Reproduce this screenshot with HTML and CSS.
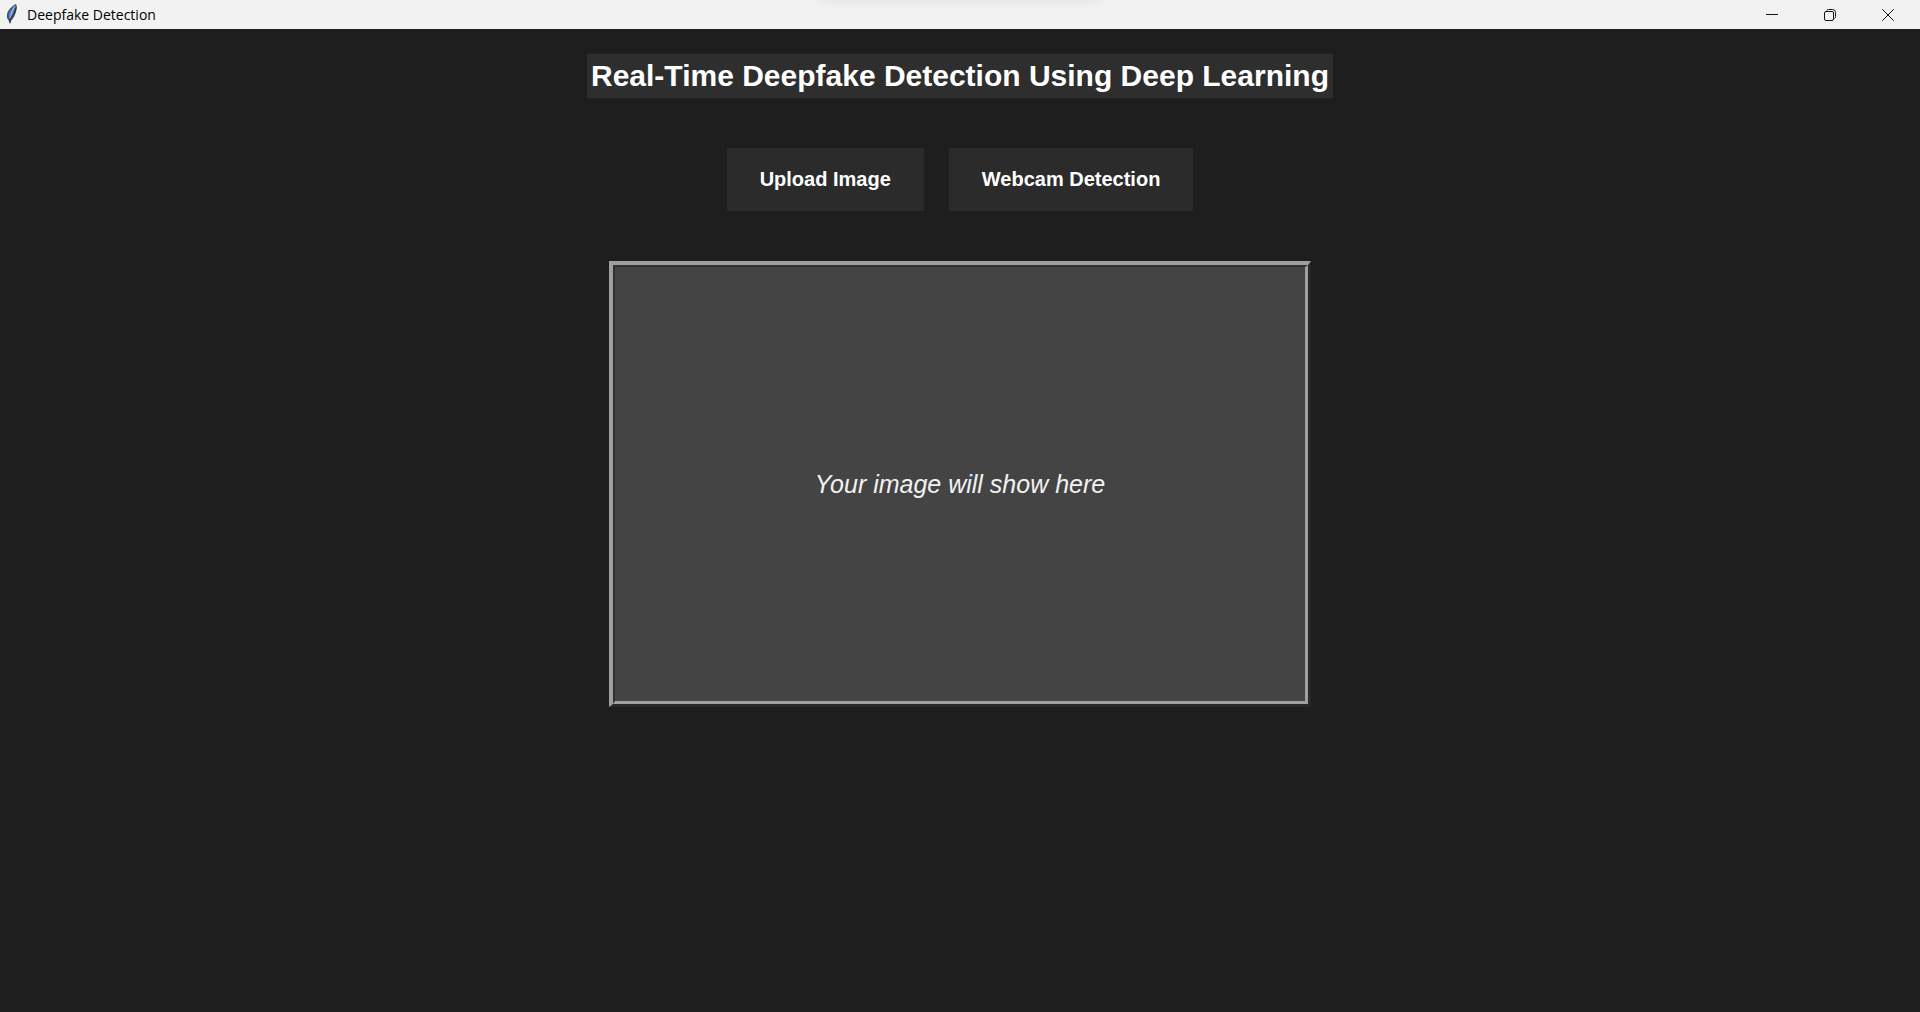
FILE: index.html
```html
<!DOCTYPE html>
<html lang="en">
<head>
<meta charset="utf-8">
<title>Deepfake Detection</title>
<link rel="stylesheet" href="styles.css">
</head>
<body>
<div class="window">
  <header class="titlebar">
    <svg class="feather" width="12" height="20" viewBox="0 0 12 20" aria-hidden="true">
      <path d="M10 0C6 2 2 6 1 10L1 14L3 17L4 20L5 17L8 13L10 8L11 3Z" fill="#435466"/>
      <path d="M9.500 1.500C6 4 3 7 2.500 11L3 15L7 11L9 6Z" fill="#4f82bd"/>
      <path d="M9 2C6 6 5 10 4 15" fill="none" stroke="#a9c7e8"/>
      <path d="M10 4L8 10L4 15V19" fill="none" stroke="#20262d"/>
    </svg>
    <span class="caption">Deepfake Detection</span>
    <div class="window-controls">
      <button class="control" type="button" aria-label="Minimize">
        <svg width="12" height="12" viewBox="0 0 12 12"><path d="M0 5.500H12"/></svg>
      </button>
      <button class="control" type="button" aria-label="Restore">
        <svg width="12" height="12" viewBox="0 0 12 12"><rect x=".5" y="2.500" width="9" height="9" rx="1.500"/><path d="M2.500 1.500Q3 .5 4.500 .5H8.500Q11.500 .5 11.500 3.500V7.500Q11.500 9 10.500 9.500"/></svg>
      </button>
      <button class="control" type="button" aria-label="Close">
        <svg width="12" height="12" viewBox="0 0 12 12"><path d="M.3 .3L11.700 11.700M11.700 .3L.3 11.700"/></svg>
      </button>
    </div>
  </header>
  <main class="content">
    <h1 class="heading">Real-Time Deepfake Detection Using Deep Learning</h1>
    <div class="actions">
      <button class="action" type="button">Upload Image</button>
      <button class="action" type="button">Webcam Detection</button>
    </div>
    <section class="preview">
      <div class="preview-inner">
        <p class="placeholder">Your image will show here</p>
      </div>
    </section>
  </main>
</div>
</body>
</html>
```
FILE: styles.css
```css
* {
  box-sizing: border-box;
}

body {
  margin: 0;
  background: #1e1e1e;
  color: #fff;
  font-family: "Liberation Sans", Arial, sans-serif;
}

.window {
  display: flex;
  flex-direction: column;
  min-height: 100vh;
}

.titlebar {
  position: relative;
  display: flex;
  align-items: center;
  height: 29px;
  padding: 0 3px 0 6px;
  overflow: hidden;
  background: #f2f2f2;
  color: #000;
}

/* Soft shadow cast from above the window */
.titlebar::before {
  content: "";
  position: absolute;
  top: -12px;
  left: 50%;
  width: 280px;
  height: 10px;
  transform: translateX(-50%);
  box-shadow: 0 0 14px rgba(0, 0, 0, 0.12);
}

.feather {
  margin-bottom: 2px;
}

.caption {
  margin-left: 9px;
  font: 14px/20px "Open Sans", "Noto Sans", sans-serif;
}

.window-controls {
  display: flex;
  margin-left: auto;
  height: 28px;
}

.control {
  display: flex;
  align-items: center;
  justify-content: center;
  width: 58px;
  padding: 0;
  border: 0;
  background: transparent;
}

.control svg {
  fill: none;
  stroke: #111;
}

.content {
  display: flex;
  flex-direction: column;
  align-items: center;
  padding: 25px 20px;
}

.heading {
  margin: 0;
  padding: 0 4px;
  background: #2e2e2e;
  font-size: 30px;
  line-height: 44px;
}

.actions {
  display: flex;
  gap: 25px;
  margin: 50px 0;
}

.action {
  padding: 20px 33px;
  border: 0;
  background: #2b2b2b;
  color: #fff;
  font: bold 20px/23px "Liberation Sans", Arial, sans-serif;
}

/* Ridge: lit outer edge at top left, lit inner edge at bottom right */
.preview {
  width: 100%;
  max-width: 702px;
  border: solid;
  border-width: 4px 3px 3px 4px;
  border-color: #a0a0a0 #282828 #282828 #a0a0a0;
}

.preview-inner {
  display: flex;
  align-items: center;
  justify-content: center;
  min-height: 439px;
  border: solid;
  border-width: 2px 3px 3px 2px;
  border-color: #303030 #a0a0a0 #a0a0a0 #303030;
  background: #444;
}

.placeholder {
  margin: 0;
  color: #f2f2f2;
  font-size: 25px;
  font-style: italic;
  line-height: 28px;
}
```
